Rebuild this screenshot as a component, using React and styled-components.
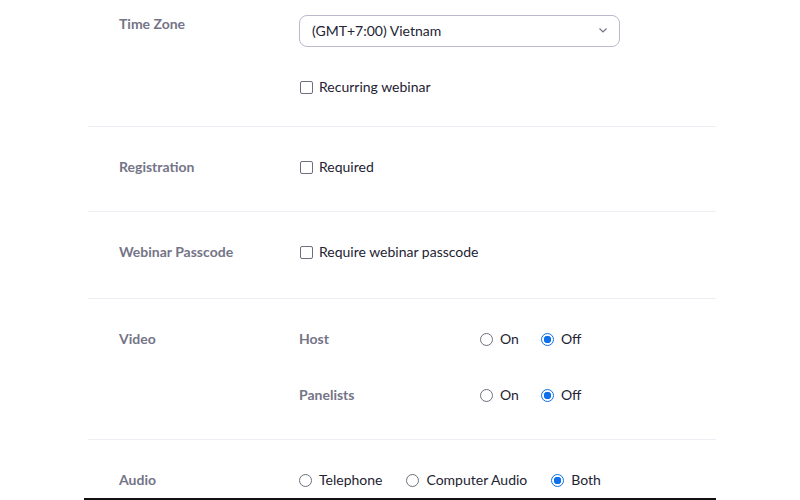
import React from 'react'
import styled, { createGlobalStyle } from 'styled-components'

const GlobalStyle = createGlobalStyle`
  html, body {
    margin: 0;
    padding: 0;
    background: #ffffff;
    font-family: Lato, "Open Sans", sans-serif;
    overflow: hidden;
  }
`

export default function App() {
  return (
    <Page>
      <GlobalStyle />
      <Form>
        <Section $top={14} $bottom={29} $first>
          <Label>Time Zone</Label>
          <Field>
            <Select>
              <span>(GMT+7:00) Vietnam</span>
              <Chevron viewBox="0 0 8 5">
                <polyline points="0.5,0.5 4,4 7.5,0.5" />
              </Chevron>
            </Select>
            <CheckRow $gap={30}>
              <Box type="checkbox" />
              <Text>Recurring webinar</Text>
            </CheckRow>
          </Field>
        </Section>

        <Section>
          <Label>Registration</Label>
          <CheckRow>
            <Box type="checkbox" />
            <Text>Required</Text>
          </CheckRow>
        </Section>

        <Section $bottom={36}>
          <Label>Webinar Passcode</Label>
          <CheckRow>
            <Box type="checkbox" />
            <Text>Require webinar passcode</Text>
          </CheckRow>
        </Section>

        <Section>
          <Label>Video</Label>
          <SubGrid>
            <Label>Host</Label>
            <Options $gap={22}>
              <Option><Radio type="radio" name="host" /><Text>On</Text></Option>
              <Option><Radio type="radio" name="host" defaultChecked /><Text>Off</Text></Option>
            </Options>
            <Label>Panelists</Label>
            <Options $gap={22}>
              <Option><Radio type="radio" name="pan" /><Text>On</Text></Option>
              <Option><Radio type="radio" name="pan" defaultChecked /><Text>Off</Text></Option>
            </Options>
          </SubGrid>
        </Section>

        <Section $bottom={8}>
          <Label>Audio</Label>
          <Options>
            <Option><Radio type="radio" name="audio" /><Text>Telephone</Text></Option>
            <Option><Radio type="radio" name="audio" /><Text>Computer Audio</Text></Option>
            <Option><Radio type="radio" name="audio" defaultChecked /><Text>Both</Text></Option>
          </Options>
        </Section>
      </Form>
      <Footer />
    </Page>
  )
}

const Page = styled.div`
  width: 632px;
  margin-left: 84px;
`

const Form = styled.div`
  margin-left: 4px;
`

const Section = styled.div`
  display: grid;
  grid-template-columns: 180px 1fr;
  align-items: start;
  padding: ${p => p.$top ?? 30}px 0 ${p => p.$bottom ?? 34}px 31px;
  border-top: ${p => (p.$first ? 'none' : '1px solid #ededf4')};
`

const Label = styled.div`
  font-size: 14px;
  font-weight: 700;
  line-height: 20px;
  color: #747487;
`

const Field = styled.div`
  display: flex;
  flex-direction: column;
`

const Select = styled.div`
  box-sizing: border-box;
  width: 321px;
  height: 32px;
  margin-top: 1px;
  display: flex;
  align-items: center;
  justify-content: space-between;
  padding: 0 12px 1px 12px;
  border: 1px solid #babacc;
  border-radius: 8px;
  font-size: 14px;
  color: #232333;
`

const Chevron = styled.svg`
  width: 8px;
  height: 5px;
  fill: none;
  stroke: #747487;
  stroke-width: 1.2;
`

const CheckRow = styled.label`
  display: flex;
  align-items: center;
  gap: 6px;
  height: 20px;
  margin-top: ${p => p.$gap ?? 0}px;
`

const Text = styled.span`
  font-size: 14px;
  line-height: 20px;
  color: #232333;
`

const Box = styled.input`
  appearance: none;
  box-sizing: border-box;
  width: 13px;
  height: 13px;
  margin: 0 0 0 1px;
  border: 1px solid #6e6e7e;
  border-radius: 2px;
  background: #fff;
`

const SubGrid = styled.div`
  display: grid;
  grid-template-columns: 181px 1fr;
  row-gap: 36px;
`

const Options = styled.div`
  display: flex;
  align-items: center;
  gap: ${p => p.$gap ?? 24}px;
  height: 20px;
`

const Option = styled.label`
  display: flex;
  align-items: center;
  gap: 7px;
`

const Radio = styled.input`
  appearance: none;
  box-sizing: border-box;
  width: 13px;
  height: 13px;
  margin: 0;
  border-radius: 50%;
  border: 1px solid #6e6e7e;
  background: #fff;
  &:checked {
    border: 1px solid #0e71eb;
    background: radial-gradient(circle, #0e71eb 0 3.5px, #fff 4px);
  }
`

const Footer = styled.div`
  height: 4px;
  background: #111114;
`
